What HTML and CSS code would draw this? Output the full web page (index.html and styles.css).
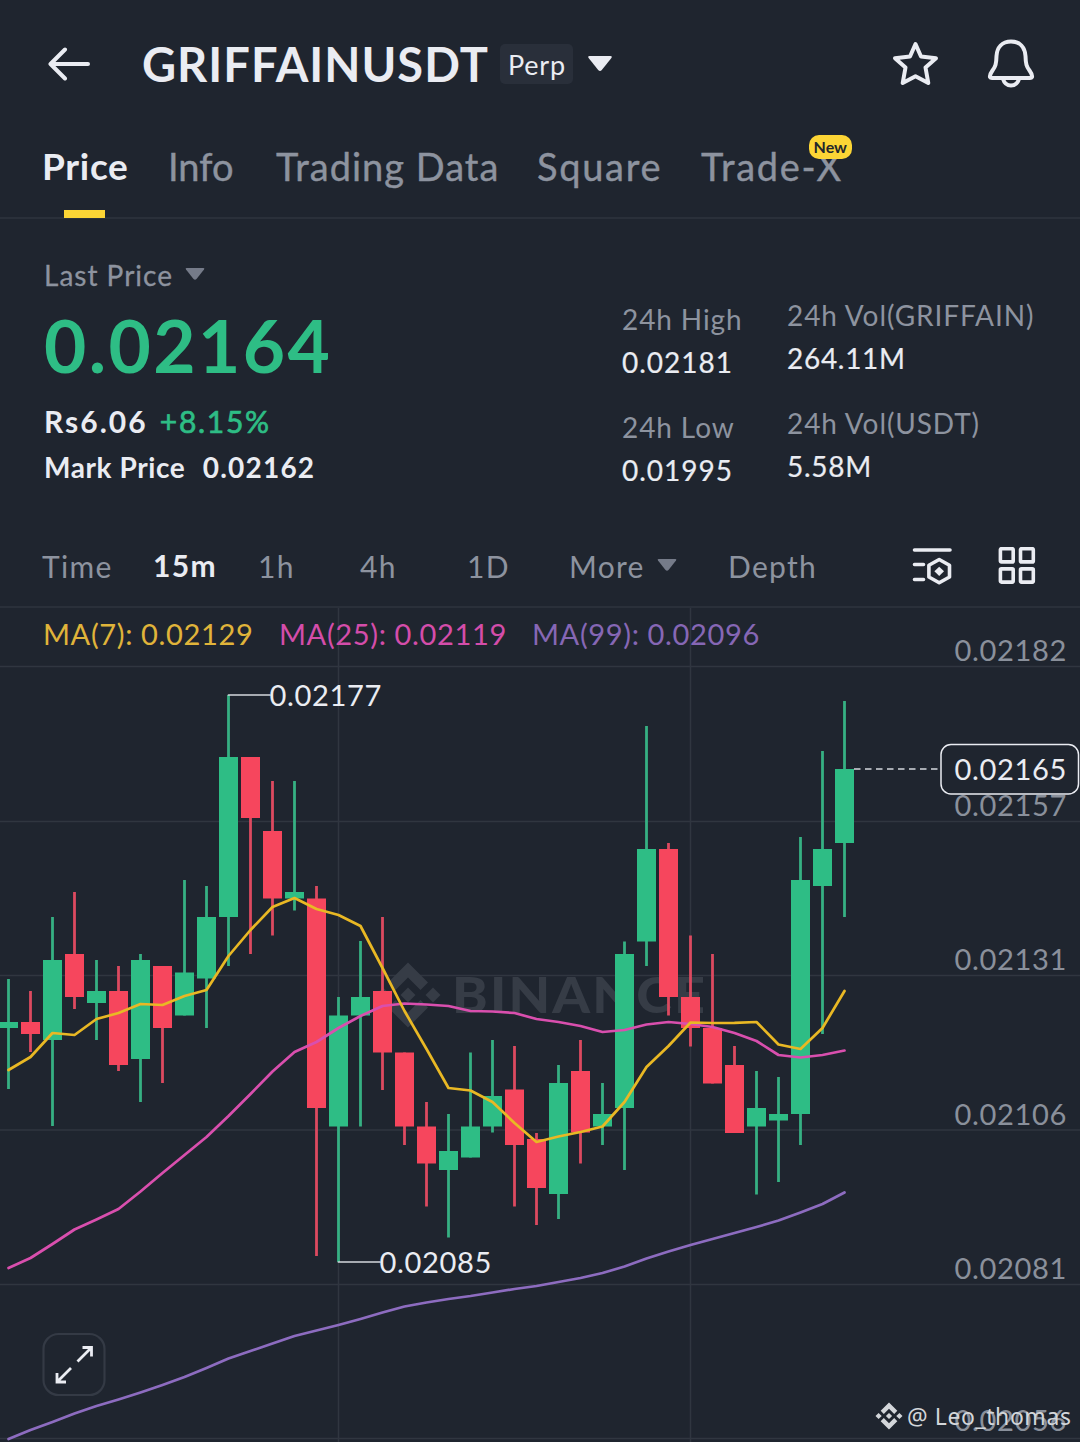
FILE: index.html
```html
<!DOCTYPE html>
<html lang="en">
<head>
<meta charset="utf-8">
<title>GRIFFAINUSDT Perp</title>
<link rel="stylesheet" href="styles.css">
</head>
<body>
<header class="topbar">
   <svg class="back" width="42" height="34" viewBox="0 0 42 34"><path d="M17 2.500L2.500 17L17 31.500M3 17H40"/></svg>
   <h1 class="symbol">GRIFFAINUSDT</h1>
   <span class="perp">Perp</span>
   <svg class="caret-big" width="26" height="18" viewBox="0 0 26 18"><path d="M2.500 1H23.500Q25.500 1.200 24.400 3L14.800 15Q13 17 11.200 15L1.600 3Q.5 1.200 2.500 1Z"/></svg>
   <div class="actions">
      <svg width="50" height="50" viewBox="0 0 50 50"><path d="M25.500 5L31 17.500L46 19.200L35.500 28.500L38.300 44L25.500 37.300L12.700 44L15.500 28.500L5 19.200L20 17.500Z"/></svg>
      <svg width="50" height="50" viewBox="0 0 50 50"><path d="M25 2.500C16 2.500 11 8.500 10.500 17C10.300 25 9.500 27.500 6.500 31.500C4 35 3.500 36 4 38Q4.500 39 6 39H44Q45.500 39 46 38C46.500 36 46 35 43.500 31.500C40.500 27.500 39.700 25 39.500 17C39 8.500 34 2.500 25 2.500Z"/><path d="M17 40Q19 46.500 25 46.500T33 40"/></svg>
   </div>
</header>

<nav class="tabs">
   <a class="tab active">Price</a>
   <a class="tab info">Info</a>
   <a class="tab">Trading Data</a>
   <a class="tab wide">Square</a>
   <a class="tab wide">Trade-X<span class="new">New</span></a>
</nav>

<section class="summary">
   <div class="last">
      <div class="label">Last Price <svg width="20" height="14" viewBox="0 0 20 14"><path d="M1.500 1H18.500Q20 1 19 2.500L11.500 12Q10 13.500 8.500 12L1 2.500Q0 1 1.500 1Z"/></svg></div>
      <div class="price">0.02164</div>
      <div class="fiat">Rs6.06 <span class="change">+8.15%</span></div>
      <div class="mark">Mark Price <span class="mark-value">0.02162</span></div>
   </div>
   <dl class="stats">
      <div><dt>24h High</dt><dd>0.02181</dd></div>
      <div><dt>24h Low</dt><dd>0.01995</dd></div>
   </dl>
   <dl class="stats volume">
      <div><dt>24h Vol(GRIFFAIN)</dt><dd>264.11M</dd></div>
      <div><dt>24h Vol(USDT)</dt><dd>5.58M</dd></div>
   </dl>
</section>

<nav class="intervals">
   <a>Time</a>
   <a class="active">15m</a>
   <a>1h</a>
   <a>4h</a>
   <a>1D</a>
   <a>More <svg width="20" height="14" viewBox="0 0 20 14"><path d="M1.500 1H18.500Q20 1 19 2.500L11.500 12Q10 13.500 8.500 12L1 2.500Q0 1 1.500 1Z"/></svg></a>
   <a>Depth</a>
   <svg class="tool" width="40" height="38" viewBox="0 0 40 38"><path d="M2.500 3H38M2.500 17.500H11.500M2.500 32.500H11.500"/><path d="M27.200 12.500L37.500 18.300V30L27.200 35.800L16.900 30V18.300Z"/><path class="solid" d="M27.200 19.700L32 24.300L27.200 28.900L22.400 24.300Z"/></svg>
   <svg class="tool" width="38" height="38" viewBox="0 0 38 38"><rect x="2.400" y="1.700" width="12.800" height="13.200" rx="1"/><rect x="22.500" y="1.700" width="12.800" height="13.200" rx="1"/><rect x="2.400" y="21.900" width="12.800" height="13.200" rx="1"/><rect x="22.500" y="21.900" width="12.800" height="13.200" rx="1"/></svg>
</nav>

<svg class="chart" id="chart" width="1080" height="834" viewBox="0 608 1080 834"></svg>

<script src="chart.js"></script>
</body>
</html>
```
FILE: styles.css
```css
* {
    box-sizing: border-box;
}

body {
    margin: 0;
    width: 1080px;
    height: 1442px;
    overflow: hidden;
    background: #1f252f;
    color: #eaecf2;
    font-family: Lato, "Liberation Sans", sans-serif;
}

svg {
    display: block;
    fill: none;
    stroke-linecap: round;
    stroke-linejoin: round;
}

/* header */
.topbar {
    display: flex;
    align-items: center;
    height: 128px;
    padding: 0 44px 0 48px;
}

.back {
    stroke: #eaecf2;
    stroke-width: 4;
}

.symbol {
    width: 348px;
    margin: 0 10px 0 52px;
    font-size: 47px;
    line-height: 56px;
    font-weight: 700;
    letter-spacing: 1px;
    white-space: nowrap;
}

.perp {
    width: 73px;
    height: 40px;
    padding-left: 8px;
    border-radius: 5px;
    background: #292f3a;
    font-size: 27px;
    line-height: 41px;
    letter-spacing: .8px;
}

.caret-big {
    margin-left: 14px;
    fill: #eaecf2;
}

.actions {
    display: flex;
    gap: 46px;
    margin-left: auto;
    stroke: #eaecf2;
    stroke-width: 4;
}

/* tabs */
.tabs {
    display: grid;
    grid-template-columns: 126px 108px 261px 164px auto;
    justify-items: start;
    height: 91px;
    padding-left: 42px;
    border-bottom: 2px solid #2a303a;
}

.tab {
    position: relative;
    height: 90px;
    color: #8d939f;
    font-size: 38px;
    line-height: 76px;
    letter-spacing: 1px;
    white-space: nowrap;
    -webkit-text-stroke: .4px;
}

.tab.info {
    letter-spacing: 0;
}

.tab.wide {
    letter-spacing: 1.7px;
}

.tab.active {
    color: #eaecf2;
    font-size: 37px;
    font-weight: 700;
    letter-spacing: .7px;
    -webkit-text-stroke: 0;
}

.tab.active::after {
    content: "";
    position: absolute;
    left: 22px;
    bottom: 0;
    width: 41px;
    height: 8px;
    background: #fcd535;
}

.new {
    position: absolute;
    right: -9px;
    top: 7px;
    width: 43px;
    height: 24px;
    border-radius: 10px;
    background: #fcd535;
    color: #23262b;
    font-size: 16px;
    line-height: 24px;
    font-weight: 700;
    letter-spacing: 0;
    text-align: center;
    -webkit-text-stroke: 0;
}

/* price summary */
.summary {
    display: flex;
    height: 307px;
    padding: 36px 0 0 44px;
    font-size: 28px;
    letter-spacing: 1px;
}

.last {
    width: 578px;
}

.label {
    display: flex;
    align-items: center;
    gap: 12px;
    height: 40px;
    color: #8d939f;
    -webkit-text-stroke: .3px;
}

.label svg,
.intervals a svg {
    fill: #757b89;
}

.label svg {
    margin-top: -2px;
}

.price {
    height: 103px;
    color: #2ebd85;
    font-size: 73px;
    line-height: 101px;
    font-weight: 700;
    letter-spacing: 2.4px;
}

.fiat,
.mark {
    font-weight: 700;
    line-height: 46px;
}

.fiat {
    font-size: 30px;
    letter-spacing: 2px;
}

.change {
    margin-left: 3px;
    color: #2ebd85;
    font-weight: 400;
    letter-spacing: 1.7px;
    -webkit-text-stroke: .7px;
}

.mark {
    letter-spacing: .6px;
}

.mark-value {
    margin-left: 10px;
    letter-spacing: 1.2px;
}

.stats {
    width: 165px;
    margin: 43px 0 0;
    white-space: nowrap;
}

.stats div {
    height: 108px;
}

.stats dt {
    color: #8d939f;
    line-height: 43px;
    letter-spacing: .9px;
}

.stats dd {
    margin: 0;
    line-height: 43px;
    -webkit-text-stroke: .2px;
}

.volume {
    margin-top: 39px;
}

.volume dd {
    letter-spacing: .7px;
}

/* chart toolbar */
.intervals {
    display: grid;
    grid-template-columns: 111px 105px 102px 107px 102px 159px 184px 86px auto;
    align-items: center;
    height: 82px;
    padding-left: 42px;
    border-bottom: 2px solid #2a303a;
    font-size: 30px;
    line-height: 34px;
    letter-spacing: 1.3px;
    color: #8d939f;
}

.intervals a {
    display: flex;
    align-items: center;
    gap: 12px;
}

.intervals a svg {
    margin-top: -3px;
}

.intervals .active {
    margin-top: -2px;
    color: #eaecf2;
    font-weight: 700;
}

.tool {
    stroke: #eaecf2;
    stroke-width: 3.6;
}

.solid {
    fill: #eaecf2;
    stroke: none;
}

/* chart */
.chart text {
    font-size: 28px;
    letter-spacing: .6px;
}

.grid {
    stroke: #303640;
    stroke-width: 1.5;
}

.watermark {
    fill: #363c46;
}

.chart .watermark text {
    font-size: 50px;
    font-weight: 900;
    letter-spacing: 2px;
}

.wick {
    stroke-width: 2.8;
    stroke-linecap: butt;
}

.up {
    fill: #2ebd85;
    stroke: #36b083;
}

.down {
    fill: #f6465d;
    stroke: #dc4a60;
}

.body {
    stroke: none;
}

.ma {
    stroke-width: 2.7;
}

.ma7 {
    stroke: #e9b824;
}

.ma25 {
    stroke: #d94fae;
}

.ma99 {
    stroke: #8d6cc0;
}

.ma7-label {
    fill: #e0b43a;
}

.ma25-label {
    fill: #d44daa;
}

.ma99-label {
    fill: #8667b5;
}

.axis {
    fill: #8a909b;
}

.bright {
    fill: #eaecf2;
}

.leader {
    stroke: #d5d8de;
    stroke-width: 1.7;
}

.dashed {
    stroke: #d5d8de;
    stroke-width: 1.6;
    stroke-linecap: butt;
    stroke-dasharray: 6.500 4.500;
}

.tag {
    fill: #1f252f;
    stroke: #eaecf2;
    stroke-width: 1.5;
}

.expand {
    fill: #1f252f;
    stroke: #343a45;
    stroke-width: 2.2;
}

.arrows {
    stroke: #eaecf2;
    stroke-width: 2.8;
    stroke-linecap: butt;
    stroke-linejoin: miter;
}

.author {
    fill: #d3d6da;
}

.chart .author text {
    font-family: "Noto Sans", sans-serif;
    font-size: 23px;
}
```
FILE: chart.js
```js
var svg = document.getElementById("chart");
var STEP = 22;
var FIRST = 8.5;

// [direction, high, body top, body bottom, low]
var candles = [
   [1, 979, 1022, 1028, 1089], [0, 991, 1022, 1034, 1052], [1, 917, 960, 1040, 1126],
   [0, 892, 954, 997, 1009], [1, 960, 991, 1003, 1040], [0, 966, 991, 1065, 1071],
   [1, 954, 960, 1059, 1102], [0, 966, 966, 1028, 1083], [1, 880, 972.500, 1015.500, 1015.500],
   [1, 886, 917, 978.500, 1028], [1, 695, 757, 917, 966], [0, 757, 757, 818, 954],
   [0, 781, 831, 898.500, 935.500], [1, 781, 892, 898.500, 910.500], [0, 886, 898.500, 1108, 1256],
   [1, 997, 1015.500, 1126.500, 1262], [1, 941, 997, 1015.500, 1126.500], [0, 917, 991, 1052.500, 1090],
   [0, 1052.500, 1052.500, 1126.500, 1145], [0, 1102, 1126.500, 1163.500, 1206.500], [1, 1114, 1151, 1170, 1237.500],
   [1, 1052.500, 1126.500, 1157.500, 1157.500], [1, 1040, 1096, 1126.500, 1132.500], [0, 1046, 1089.500, 1145, 1206.500],
   [0, 1133, 1139, 1188, 1225], [1, 1065, 1083, 1194, 1219], [0, 1040, 1071, 1132.500, 1163.500],
   [1, 1083, 1114, 1126.500, 1145], [1, 941.500, 954, 1108, 1170], [1, 726, 849, 941.500, 966],
   [0, 843, 849, 997, 1015.500], [0, 935.500, 997, 1028, 1046.500], [0, 954, 1028, 1083.500, 1083.500],
   [0, 1046, 1065, 1133, 1133], [1, 1071, 1108, 1126.500, 1194.500], [1, 1077, 1114, 1120.500, 1182],
   [1, 837, 880, 1114, 1145], [1, 751, 849, 886, 1034], [1, 701, 769, 843, 917]
];

// one value per candle
var ma7 = [1070, 1057, 1033, 1035, 1019, 1013, 1004, 1005, 996, 990, 956, 930, 907, 898, 909, 915, 926, 968, 1011, 1049, 1088, 1090.500, 1102, 1123, 1142, 1136.500, 1132, 1126.500, 1102, 1067, 1046, 1022.500, 1023, 1022.800, 1022, 1044.500, 1049, 1028, 991];
var ma25 = [1268, 1258, 1244, 1229.500, 1219.500, 1209, 1191.500, 1173, 1155, 1137, 1116, 1094, 1071.500, 1052, 1042, 1028, 1016, 1006, 1003.500, 1004.500, 1006, 1011, 1011.500, 1013, 1019, 1022, 1026, 1032, 1030, 1024.500, 1022, 1024, 1027, 1033, 1041, 1055, 1057.500, 1055, 1050.500];
var ma99 = [1439, 1430, 1422, 1413.500, 1406, 1399.500, 1392.500, 1385, 1377, 1368, 1358.500, 1351, 1343.500, 1336, 1330.500, 1325, 1319, 1312.500, 1306.500, 1302.500, 1299, 1296, 1292.500, 1289, 1286, 1282, 1278, 1273, 1266.500, 1258.500, 1251.500, 1245, 1239, 1233, 1227, 1220.500, 1212.500, 1204, 1192.500];

function line(cls, x1, y1, x2, y2) {
   return '<line class="' + cls + '" x1="' + x1 + '" y1="' + y1 + '" x2="' + x2 + '" y2="' + y2 + '"/>';
}

function text(cls, x, y, width, value) {
   return '<text class="' + cls + '" x="' + x + '" y="' + y + '" textLength="' + width + '" lengthAdjust="spacingAndGlyphs">' + value + '</text>';
}

function average(cls, values) {
   var points = values.map(function (y, i) { return (FIRST + i * STEP) + "," + y; });
   return '<polyline class="ma ' + cls + '" points="' + points.join(" ") + '"/>';
}

// logo mark on a 26 x 26 grid, drawn around its centre
function logo(cx, cy, scale) {
   return '<g transform="translate(' + cx + ' ' + cy + ') scale(' + scale + ')">' +
      '<path d="M0 -13L8 -5L5 -2L0 -7L-5 -2L-8 -5Z"/><path d="M0 13L8 5L5 2L0 7L-5 2L-8 5Z"/>' +
      '<path d="M0 -3L3 0L0 3L-3 0Z"/><path d="M10 -3L13 0L10 3L7 0Z"/><path d="M-10 -3L-7 0L-10 3L-13 0Z"/></g>';
}

var out = "";

[666.5, 821.5, 975.5, 1130, 1284.5, 1438.5].forEach(function (y) {
   out += line("grid", 0, y, 1080, y);
});
out += line("grid", 338.5, 608, 338.5, 1442) + line("grid", 690.5, 608, 690.5, 1442);

out += '<g class="watermark">' + logo(408, 995, 2.5) + text("", 452, 1013, 255, "BINANCE") + '</g>';

candles.forEach(function (c, i) {
   var x = FIRST + i * STEP;
   var dir = c[0] ? "up" : "down";
   out += line("wick " + dir, x, c[1], x, c[4]);
   out += '<rect class="body ' + dir + '" x="' + (x - 9.5) + '" y="' + c[2] + '" width="19" height="' + (c[3] - c[2]) + '"/>';
});

out += average("ma99", ma99) + average("ma25", ma25) + average("ma7", ma7);

out += text("ma7-label", 43, 645, 210.500, "MA(7): 0.02129");
out += text("ma25-label", 279, 645, 228, "MA(25): 0.02119");
out += text("ma99-label", 532, 645, 228, "MA(99): 0.02096");

// highest and lowest price in view
out += line("leader", 228.5, 695, 270, 695) + text("bright", 269.500, 706, 112.500, "0.02177");
out += line("leader", 338.5, 1262, 380, 1262) + text("bright", 379.500, 1273, 112.500, "0.02085");

[[661, "0.02182"], [816, "0.02157"], [970, "0.02131"], [1125, "0.02106"], [1279, "0.02081"], [1431, "0.02056"]].forEach(function (a) {
   out += text("axis", 954.500, a[0], 112.500, a[1]);
});

// current price
out += line("dashed", 854, 769, 938, 769);
out += '<rect class="tag" x="941" y="744.500" width="137.500" height="49.500" rx="10"/>';
out += text("bright", 954.500, 780, 112.500, "0.02165");

out += '<rect class="expand" x="43.500" y="1334" width="61" height="61" rx="15"/>';
out += '<path class="arrows" d="M77.500 1361.500L91 1348M82.500 1347.500H91.500V1356.500M71 1368L57.500 1381.500M57 1373V1382H66"/>';

out += '<g class="author">' + logo(889, 1416, 1.04) + text("", 907, 1424.500, 164.500, "@ Leo_thomas") + '</g>';

svg.innerHTML = out;
```
